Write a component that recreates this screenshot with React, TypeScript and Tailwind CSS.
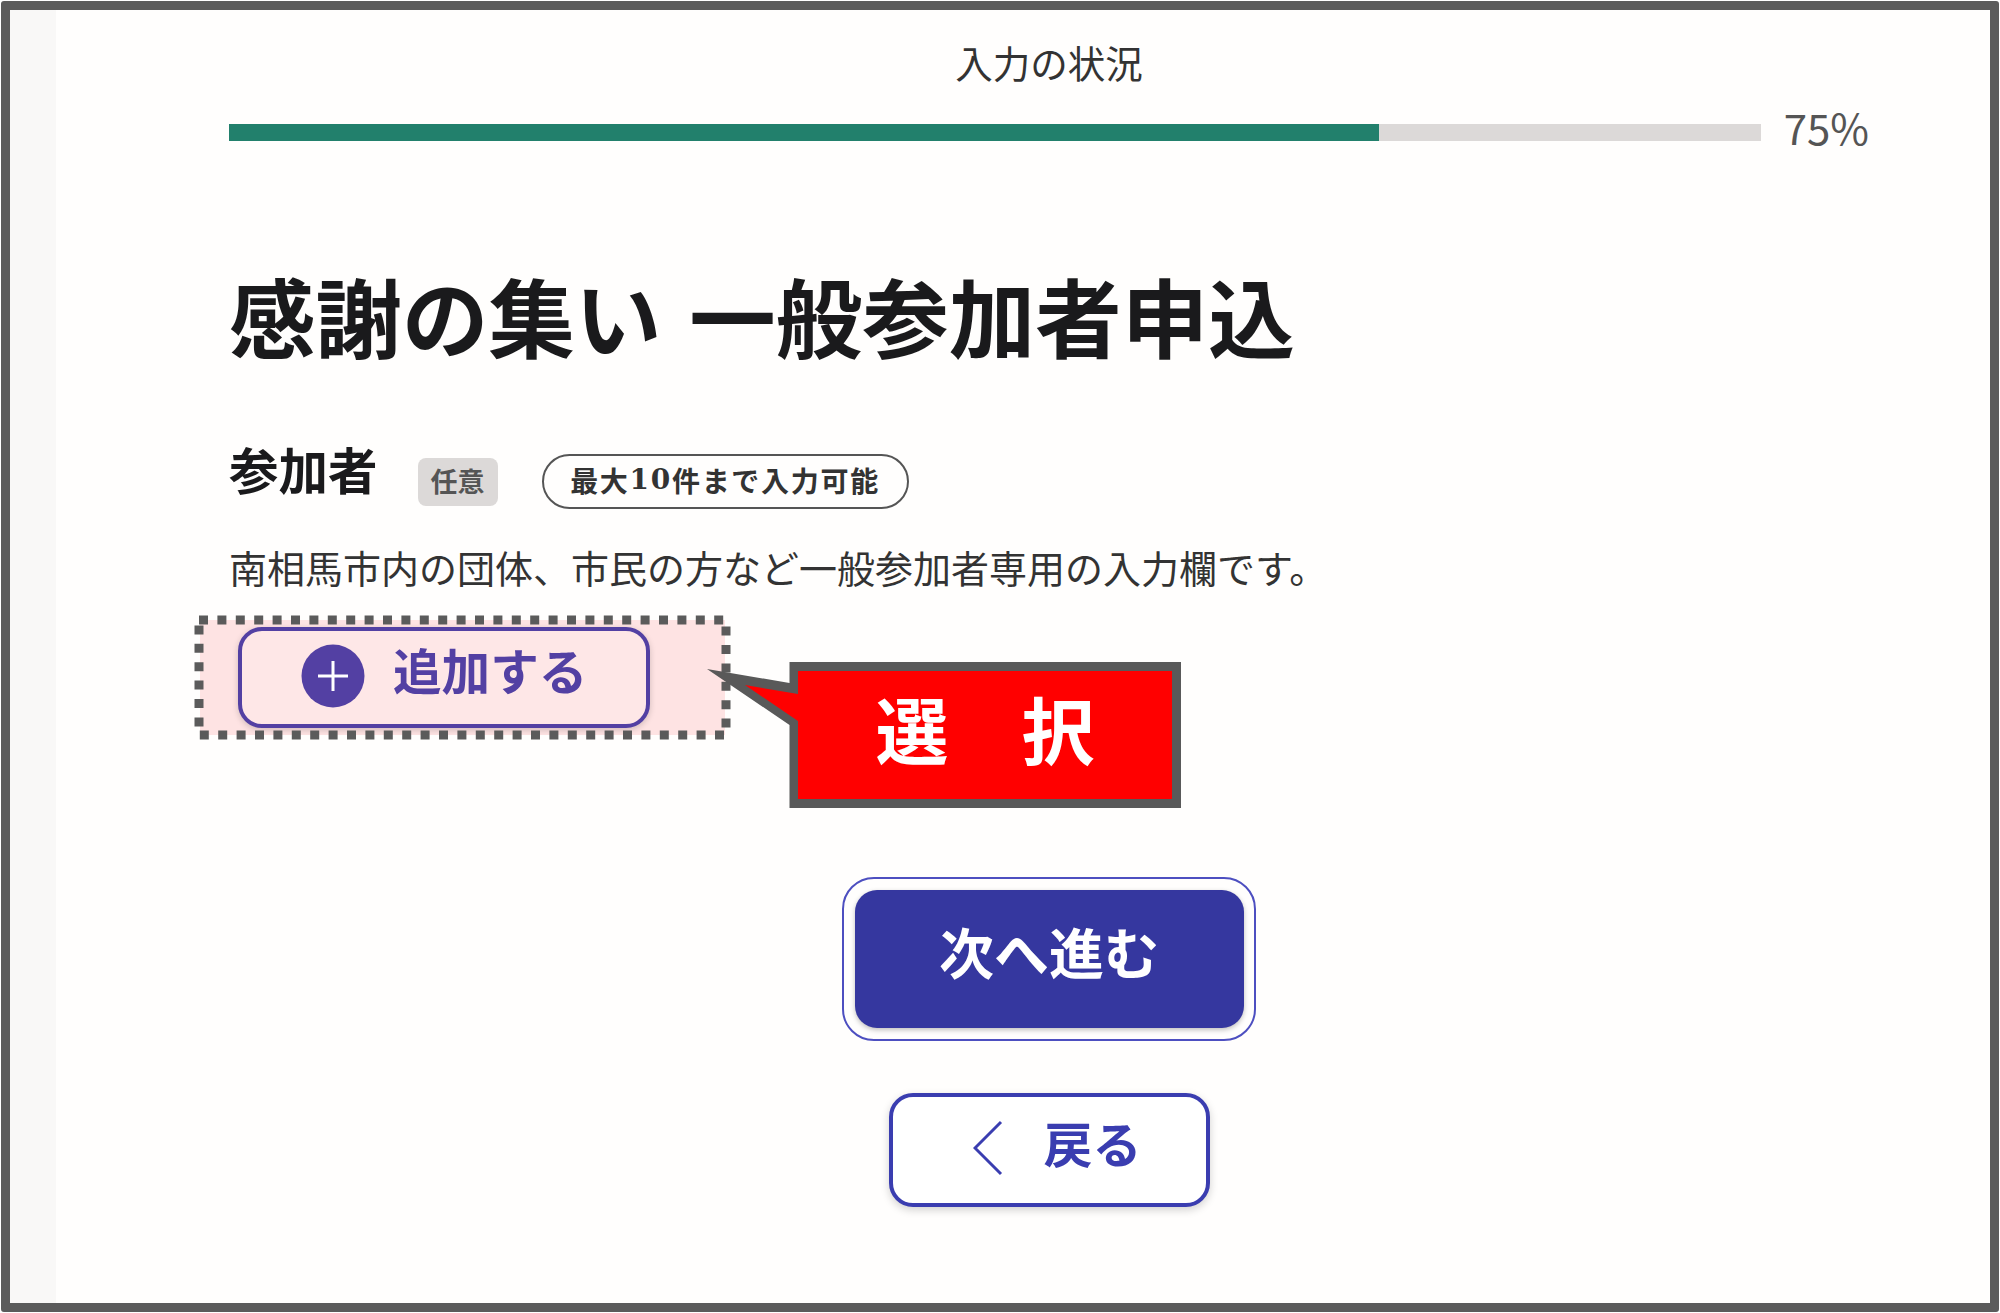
import React from "react";

const JP = "font-['Noto_Sans_CJK_JP','Noto_Sans',sans-serif]";

function Callout() {
  return (
    <div className="absolute left-[697px] top-[652px] w-[484px] h-[156px]">
      <svg className="absolute inset-0" width="484" height="156" viewBox="697 652 484 156">
        <polygon
          points="707,669 789.5,683 789.5,662 1181,662 1181,808 789.5,808 789.5,725"
          fill="#595959"
        />
        <polygon
          points="745,685 798,694 798,671 1172,671 1172,799 798,799 798,721"
          fill="#ff0000"
        />
      </svg>
      <div className="absolute left-[92px] top-[1px] w-[392px] h-[146px] flex items-center justify-center text-white font-bold text-[73px] leading-none pt-[2px]">
        選　択
      </div>
    </div>
  );
}

export default function App() {
  return (
    <div className={`w-[2000px] h-[1313px] bg-white p-px overflow-hidden ${JP}`}>
      <div className="relative h-full box-border border-[9px] border-[#5b5b5b] rounded-[3px] bg-[#fffefd] flex">
        <div className="w-[46px] bg-[#f9f8f7] shrink-0" />
        <main className="pl-[173px] pt-[27px] flex flex-col">
          <div className="w-[1640px]">
            <div className="h-[50px] flex items-center justify-center text-[37.5px] text-[#333] leading-none">入力の状況</div>
            <div className="mt-[20px] h-[50px] flex items-center">
              <div className="w-[1532px] h-[17px] bg-[#dcd9d8]">
                <div className="h-full w-[1150px] bg-[#22806c]" />
              </div>
              <div className="ml-[23px] text-[42px] leading-none text-[#555] -mt-[11px]">75%</div>
            </div>
          </div>

          <h1 className="mt-[108px] h-[100px] flex items-center text-[86.5px] font-bold text-[#1a1a1c] leading-none whitespace-nowrap [word-spacing:8px]">
            感謝の集い 一般参加者申込
          </h1>

          <div className="mt-[88px] h-[56px] flex items-center">
            <span className="text-[49.5px] font-bold leading-none text-[#1a1a1c] -mt-[24px]">参加者</span>
            <span className="ml-[40px] mt-[2px] w-[80px] h-[48px] rounded-[8px] bg-[#dcd9d8] flex items-center justify-center text-[27px] font-bold text-[#555] leading-none pb-[3px]">
              任意
            </span>
            <span className="ml-[44px] w-[367px] h-[55px] rounded-full border-2 border-[#555] flex items-center justify-center text-[28px] font-bold text-[#333] leading-none tracking-[1.7px] pb-[2px]">
              最大<span className="font-['DejaVu_Serif',serif]">10</span>件まで入力可能
            </span>
          </div>

          <p className="mt-[34px] h-[48px] flex items-center text-[38px] text-[#333] leading-none whitespace-nowrap">
            南相馬市内の団体、市民の方など一般参加者専用の入力欄です。
          </p>

          <div className="relative mt-[29px] -ml-[29px] w-[525px] h-[115px] bg-[#fee3e3] pl-[38px] pt-[7px]">
            <button className="w-[412px] h-[101px] box-border rounded-[24px] border-[4px] border-[#5340a3] bg-[#fee7e7] shadow-[0_2px_6px_rgba(0,0,0,0.18)] flex items-center pl-[59px] text-[#5340a3]">
              <svg width="64" height="64" viewBox="0 0 64 64" className="shrink-0 -mt-[4px]">
                <circle cx="32" cy="32" r="31.5" fill="#5340a3" />
                <path d="M32 17V47M17 32H47" stroke="#fff" strokeWidth="3" />
              </svg>
              <span className="ml-[28px] text-[48.6px] font-bold leading-none -mt-[17px]">追加する</span>
            </button>
            <svg className="absolute -left-[5px] -top-[4px] overflow-visible" width="535" height="123" viewBox="0 0 535 123" fill="none">
              <rect x="4" y="4" width="527" height="115" stroke="#5b5b5b" strokeWidth="9" strokeDasharray="9 9.4" />
            </svg>
          </div>

          <div className="w-[1640px] flex flex-col items-center">
            <div className="mt-[142px] w-[414px] h-[164px] box-border rounded-[32px] border-2 border-[#4d4fc0] bg-[#fffefd] flex items-center justify-center">
              <button className="w-[389px] h-[138px] rounded-[22px] bg-[#35379f] shadow-[0_2px_5px_rgba(0,0,0,0.25)] text-white text-[55px] font-bold leading-none pb-[18px]">
                次へ進む
              </button>
            </div>
            <button className="mt-[52px] w-[321px] h-[114px] box-border rounded-[24px] border-[4px] border-[#3a3db0] bg-white shadow-[0_3px_8px_rgba(0,0,0,0.18)] flex items-center pl-[80px] text-[#3a3db0]">
              <svg width="30" height="56" viewBox="0 0 30 56" fill="none" className="shrink-0 -mt-[4px]">
                <path d="M28 2L2 28L28 54" stroke="#3a3db0" strokeWidth="3" />
              </svg>
              <span className="ml-[41px] text-[49px] font-bold leading-none -mt-[18px]">戻る</span>
            </button>
          </div>
        </main>
        <div className="absolute -left-[10px] -top-[10px]">
          <Callout />
        </div>
      </div>
    </div>
  );
}
